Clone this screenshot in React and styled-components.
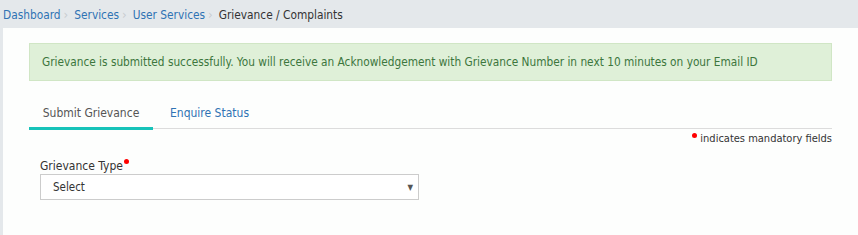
import styled, { createGlobalStyle } from 'styled-components';

const GlobalStyle = createGlobalStyle`
  html, body {
    margin: 0;
    padding: 0;
    background: #e4e8eb;
    font-family: "DejaVu Sans Condensed", "DejaVu Sans", Verdana, sans-serif;
  }
  * { box-sizing: border-box; }
`;

const crumbs = ['Dashboard', 'Services', 'User Services'];

export default function App() {
  return (
    <>
      <GlobalStyle />
      <Page>
        <Breadcrumb>
          {crumbs.map((c) => (
            <Crumb key={c}>
              <CrumbLink>{c}</CrumbLink>
              <Sep>›</Sep>
            </Crumb>
          ))}
          <Current>Grievance / Complaints</Current>
        </Breadcrumb>

        <Panel>
          <Alert>
            Grievance is submitted successfully. You will receive an Acknowledgement with Grievance Number in next 10 minutes on your Email ID
          </Alert>

          <Tabs>
            <Tab $active>Submit Grievance</Tab>
            <Tab>Enquire Status</Tab>
          </Tabs>

          <Mandatory>
            <Dot /> indicates mandatory fields
          </Mandatory>

          <Field>
            <Label>
              Grievance Type<Dot $sup />
            </Label>
            <SelectBox>
              <span>Select</span>
              <Caret>▼</Caret>
            </SelectBox>
          </Field>
        </Panel>
      </Page>
    </>
  );
}

const Page = styled.div`
  width: 858px;
  height: 235px;
  display: flex;
  flex-direction: column;
`;

const Breadcrumb = styled.nav`
  height: 28px;
  display: flex;
  align-items: center;
  padding: 1px 0 0 3px;
  font-size: 11.8px;
`;

const Crumb = styled.span`
  display: inline-flex;
  align-items: center;
`;

const CrumbLink = styled.span`
  color: #2f73b4;
`;

const Sep = styled.span`
  color: #c8ccd0;
  font-size: 13px;
  margin: 0 6px 0 3px;
`;

const Current = styled.span`
  color: #333;
`;

const Panel = styled.main`
  flex: 1;
  margin-left: 3px;
  background: #fdfefd;
  padding: 15px 26px 0 26px;
`;

const Alert = styled.div`
  height: 38px;
  display: flex;
  align-items: center;
  padding: 0 12px;
  background: #dff0d8;
  border: 1px solid #d0e6c5;
  color: #3c763d;
  font-size: 11.75px;
  white-space: nowrap;
`;

const Tabs = styled.div`
  margin-top: 20px;
  display: flex;
  border-bottom: 1px solid #dcdcdc;
  height: 28px;
`;

const Tab = styled.div`
  width: ${(p) => (p.$active ? '124px' : 'auto')};
  padding: ${(p) => (p.$active ? '5px 0 0 0' : '5px 0 0 17px')};
  text-align: ${(p) => (p.$active ? 'center' : 'left')};
  font-size: 12px;
  color: ${(p) => (p.$active ? '#555' : '#2f73b4')};
  border-bottom: 3px solid ${(p) => (p.$active ? '#17c3b9' : 'transparent')};
  margin-bottom: -2px;
`;

const Mandatory = styled.div`
  margin-top: 3px;
  text-align: right;
  font-size: 11px;
  color: #333;
`;

const Dot = styled.span`
  display: inline-block;
  width: 5px;
  height: 5px;
  border-radius: 50%;
  background: #f00;
  vertical-align: ${(p) => (p.$sup ? '6px' : '4px')};
  margin-left: ${(p) => (p.$sup ? '1px' : '0')};
`;

const Field = styled.div`
  margin-top: 14px;
  padding-left: 11px;
  width: 390px;
`;

const Label = styled.div`
  font-size: 12px;
  color: #333;
  margin-bottom: 1px;
`;

const SelectBox = styled.div`
  height: 26px;
  border: 1px solid #ccc;
  display: flex;
  align-items: center;
  justify-content: space-between;
  padding: 0 5px 0 12px;
  font-size: 11.5px;
  color: #333;
  background: #fff;
`;

const Caret = styled.span`
  font-size: 8px;
  color: #555;
`;
